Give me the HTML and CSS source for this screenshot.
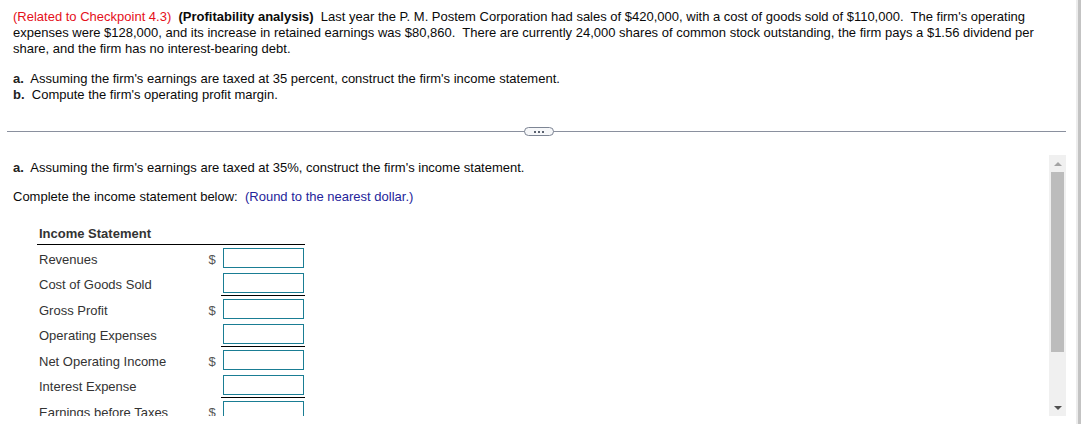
FILE: index.html
```html
<!DOCTYPE html>
<html>
<head>
<meta charset="utf-8">
<link rel="stylesheet" href="styles.css">
</head>
<body>
<div class="page">
  <div class="main">
    <div class="question">
      <p class="intro"><span class="related">(Related to Checkpoint 4.3)</span>&nbsp; <b>(Profitability analysis)</b>&nbsp; Last year the P. M. Postem Corporation had sales of $420,000, with a cost of goods sold of $110,000.&nbsp; The firm's operating expenses were $128,000, and its increase in retained earnings was $80,860.&nbsp; There are currently 24,000 shares of common stock outstanding, the firm pays a $1.56 dividend per share, and the firm has no interest-bearing debt.</p>
      <div class="parts">
        <div class="part"><b>a.</b>&nbsp; Assuming the firm's earnings are taxed at 35 percent, construct the firm's income statement.</div>
        <div class="part"><b>b.</b>&nbsp; Compute the firm's operating profit margin.</div>
      </div>
    </div>
    <div class="divider">
      <span class="more"><i></i><i></i><i></i></span>
    </div>
    <div class="scrollbox">
      <div class="content">
        <p class="step"><b>a.</b>&nbsp; Assuming the firm's earnings are taxed at 35%, construct the firm's income statement.</p>
        <p class="step">Complete the income statement below:&nbsp; <span class="hint">(Round to the nearest dollar.)</span></p>
        <div class="statement">
          <div class="st-head">Income Statement</div>
          <div class="row"><span class="lbl">Revenues</span><span class="cur">$</span><span class="val"><span class="box"></span></span></div>
          <div class="row"><span class="lbl">Cost of Goods Sold</span><span class="cur"></span><span class="val rule"><span class="box"></span></span></div>
          <div class="row"><span class="lbl">Gross Profit</span><span class="cur">$</span><span class="val"><span class="box"></span></span></div>
          <div class="row"><span class="lbl">Operating Expenses</span><span class="cur"></span><span class="val rule"><span class="box"></span></span></div>
          <div class="row"><span class="lbl">Net Operating Income</span><span class="cur">$</span><span class="val"><span class="box"></span></span></div>
          <div class="row"><span class="lbl">Interest Expense</span><span class="cur"></span><span class="val rule"><span class="box"></span></span></div>
          <div class="row"><span class="lbl">Earnings before Taxes</span><span class="cur">$</span><span class="val"><span class="box"></span></span></div>
          <div class="row"><span class="lbl">Taxes</span><span class="cur"></span><span class="val rule"><span class="box"></span></span></div>
        </div>
      </div>
      <div class="vbar">
        <div class="arrow up"></div>
        <div class="track"><div class="thumb"></div></div>
        <div class="arrow down"></div>
      </div>
    </div>
  </div>
  <div class="outerbar"></div>
</div>
</body>
</html>
```

FILE: styles.css
```css
html, body {
  margin: 0;
  padding: 0;
  background: #fff;
}
body {
  font-family: "Liberation Sans", Arial, sans-serif;
  font-size: 13px;
  line-height: 16px;
  color: #0a0a0a;
}
.page {
  display: flex;
  width: 1081px;
  height: 424px;
  overflow: hidden;
}
.main {
  width: 1059px;
  margin-left: 7px;
  margin-right: 10px;
  display: flex;
  flex-direction: column;
}
.outerbar {
  width: 5px;
  height: 424px;
  border-left: 2px solid #ececec;
  background: #c3c3c3;
  box-sizing: border-box;
}
.question {
  padding: 9px 20px 0 6px;
}
.intro {
  margin: 0;
}
.related {
  color: #e5101a;
}
.parts {
  margin-top: 14px;
}
.part b, .step b {
  color: #222;
}
.divider {
  margin-top: 23px;
  height: 11px;
  display: flex;
  align-items: center;
  justify-content: center;
  position: relative;
}
.divider::before {
  content: "";
  position: absolute;
  left: 0;
  right: 0;
  top: 5px;
  height: 1px;
  background: #8a909e;
}
.more {
  position: relative;
  width: 30px;
  height: 9px;
  box-sizing: border-box;
  border: 1px solid #7d8594;
  border-radius: 5px;
  background: #f6f7f9;
  display: flex;
  align-items: center;
  justify-content: center;
  gap: 2px;
  margin-left: 5px;
}
.more i {
  width: 2px;
  height: 2px;
  background: #5b6270;
}
.scrollbox {
  margin-top: 18px;
  height: 261px;
  display: flex;
  overflow: hidden;
}
.content {
  flex: 1;
  padding: 5px 0 0 6px;
  overflow: hidden;
}
.step {
  margin: 0 0 13px 0;
}
.hint {
  color: #24249a;
}
.statement {
  margin-left: 24px;
  margin-top: 22px;
  width: 268px;
  color: #333;
}
.st-head {
  font-weight: bold;
  padding-left: 2px;
  height: 17px;
  line-height: 13px;
  border-bottom: 1px solid #000;
}
.row {
  display: flex;
  height: 25.5px;
  align-items: center;
}
.lbl {
  width: 164px;
  padding-left: 2px;
  padding-top: 4px;
  white-space: nowrap;
}
.cur {
  width: 18px;
  padding-top: 4px;
  text-align: center;
  color: #555;
}
.val {
  width: 84px;
  height: 100%;
  box-sizing: border-box;
  padding-left: 2px;
  display: flex;
  align-items: center;
}
.val.rule {
  border-bottom: 1px solid #000;
}
.box {
  display: block;
  width: 81px;
  height: 20px;
  box-sizing: border-box;
  border: 1px solid #1a7d94;
  background: #fff;
}
.vbar {
  width: 17px;
  background: #f0f0f0;
  display: flex;
  flex-direction: column;
  align-items: center;
}
.arrow {
  width: 0;
  height: 0;
  border-left: 4px solid transparent;
  border-right: 4px solid transparent;
}
.arrow.up {
  margin-top: 7px;
  border-bottom: 4px solid #a3a3a3;
}
.arrow.down {
  margin-bottom: 6px;
  border-top: 4px solid #505050;
}
.track {
  flex: 1;
  width: 100%;
  padding-top: 6px;
}
.thumb {
  margin: 0 auto;
  width: 13px;
  height: 180px;
  background: #bcbcbc;
}
```
